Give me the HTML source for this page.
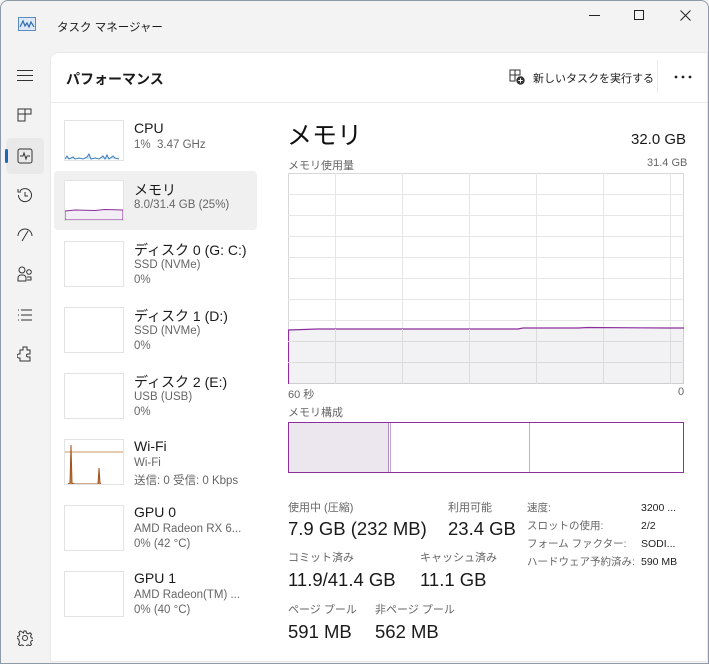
<!DOCTYPE html>
<html><head><meta charset="utf-8"><style>
*{margin:0;padding:0;box-sizing:border-box}
body{width:709px;height:664px;overflow:hidden;background:#f3f3f3;font-family:"Liberation Sans","Noto Sans CJK JP",sans-serif;color:#1a1a1a;position:relative}
.a{position:absolute;white-space:nowrap}
.win{position:absolute;left:0;top:0;width:709px;height:664px;border:1px solid #8e9aa8;border-radius:8px 8px 0 0}
.panel{position:absolute;left:50px;top:52px;width:658px;height:610px;background:#fff;border-radius:8px 0 0 0;border:1px solid #e8e8e8}
.th{position:absolute;left:64px;width:60px;height:46px;border:1px solid #e3e3e3;background:#fff}
.t{font-size:14px;color:#1a1a1a}
.s{font-size:11.5px;color:#666}
.lbl{font-size:11px;color:#666}
.big{font-size:18.5px;color:#1a1a1a}
</style></head><body>
<div class="win"></div>
<svg class="a" style="left:18px;top:17px" width="18" height="14" viewBox="0 0 18 14"><rect x="0.5" y="0.5" width="17" height="13" fill="#dfe9f5" stroke="#5b8bc4"/><path d="M2 10 L5 4 L7 9 L9 6 L11 10 L13 5 L16 10" fill="none" stroke="#2b6cb0" stroke-width="1.2"/></svg>
<div class="a" style="left:57px;top:19px;font-size:11.5px">タスク マネージャー</div>
<div class="a" style="left:589px;top:15px;width:11px;border-top:1px solid #222"></div>
<div class="a" style="left:634px;top:10px;width:10px;height:10px;border:1px solid #222"></div>
<svg class="a" style="left:680px;top:10px" width="11" height="11" viewBox="0 0 11 11"><path d="M0.5 0.5L10.5 10.5M10.5 0.5L0.5 10.5" stroke="#222" stroke-width="1"/></svg>
<div class="a" style="left:17px;top:70px;width:16px;height:11px;border-top:1px solid #333;border-bottom:1px solid #333"></div>
<div class="a" style="left:17px;top:75px;width:16px;border-top:1px solid #333"></div>
<svg class="a" style="left:17px;top:108px" width="16" height="14" viewBox="0 0 16 14" fill="none" stroke="#333"><path d="M1 1h7v5H1zM8 1h6v5H8zM1 6h7v7H1z"/></svg>
<div class="a" style="left:6px;top:138px;width:38px;height:36px;background:#e9e9e9;border-radius:5px"></div>
<div class="a" style="left:5px;top:149px;width:3px;height:14px;background:#1e63b8;border-radius:2px"></div>
<svg class="a" style="left:17px;top:148px" width="16" height="16" viewBox="0 0 16 16" fill="none" stroke="#333"><rect x="1" y="1" width="14" height="14" rx="2"/><path d="M3 8h3l1-3 2 6 1-3h3"/></svg>
<svg class="a" style="left:17px;top:187px" width="16" height="16" viewBox="0 0 16 16" fill="none" stroke="#333"><path d="M3 4A6.5 6.5 0 1 1 1.5 8M1 2v3h3M8 5v4h3"/></svg>
<svg class="a" style="left:17px;top:228px" width="16" height="14" viewBox="0 0 16 14" fill="none" stroke="#333"><path d="M1 8A7 7 0 0 1 15 8M8 8l3-5M5 13l3-5"/></svg>
<svg class="a" style="left:17px;top:266px" width="16" height="16" viewBox="0 0 16 16" fill="none" stroke="#333"><circle cx="5" cy="4" r="3"/><circle cx="12" cy="6" r="2.3"/><path d="M1 15v-3a3 3 0 0 1 3-3h2a3 3 0 0 1 3 3v3zM10 11h4v3h-4"/></svg>
<svg class="a" style="left:17px;top:308px" width="16" height="14" viewBox="0 0 16 14" fill="none" stroke="#333"><path d="M1 2h1M1 7h1M1 12h1M4 2h11M4 7h11M4 12h11"/></svg>
<svg class="a" style="left:17px;top:346px" width="16" height="17" viewBox="0 0 16 17" fill="none" stroke="#333"><path d="M6 1h4v3h3v4h-2a1.5 1.5 0 0 0 0 3h2v4H3v-3h-1a2 2 0 0 1 0-4h1V4h3z"/></svg>
<svg class="a" style="left:17px;top:630px" width="16" height="16" viewBox="0 0 16 16" fill="none" stroke="#333"><circle cx="8" cy="8" r="2.5"/><path d="M7 1h2l.5 2 1.8.8 1.8-1 1.4 1.4-1 1.8.8 1.8 2 .5v2l-2 .5-.8 1.8 1 1.8-1.4 1.4-1.8-1-1.8.8-.5 2H7l-.5-2-1.8-.8-1.8 1-1.4-1.4 1-1.8L1.700 9 0 8.5v-2l2-.5.8-1.8-1-1.8 1.4-1.4 1.8 1L6.5 3z"/></svg>
<div class="panel"></div>
<div class="a" style="left:51px;top:102px;width:657px;border-top:1px solid #eaeaea"></div>
<div class="a" style="left:66px;top:69px;font-size:14px;font-weight:bold;color:#1a1a1a">パフォーマンス</div>
<svg class="a" style="left:509px;top:69px" width="16" height="16" viewBox="0 0 16 16"><path d="M1 1h5v5H1zM6 1h5v5H6zM1 6h5v6H1z" fill="none" stroke="#333"/><circle cx="11.5" cy="11.5" r="4.2" fill="#333"/><path d="M11.5 9.3v4.4M9.3 11.5h4.4" stroke="#fff"/></svg>
<div class="a" style="left:533px;top:70px;font-size:11px">新しいタスクを実行する</div>
<div class="a" style="left:657px;top:60px;height:33px;border-left:1px solid #eaeaea"></div>
<svg class="a" style="left:674px;top:75px" width="18" height="4" viewBox="0 0 18 4"><circle cx="2" cy="2" r="1.4" fill="#222"/><circle cx="9" cy="2" r="1.4" fill="#222"/><circle cx="16" cy="2" r="1.4" fill="#222"/></svg>
<div class="a" style="left:54px;top:171px;width:203px;height:59px;background:#f0f0f0;border-radius:4px"></div>
<div class="th" style="top:120px;height:41px"><svg width="58" height="39" viewBox="0 0 58 39"><path d="M0 38 L2 35 L4 38 L8 36 L10 38 L14 37 L18 38 L22 36 L24 33 L26 38 L30 37 L34 38 L38 35 L40 38 L42 34 L44 38 L48 35 L50 37 L54 38" fill="#cfe3f3" stroke="#3d7fba" stroke-width="1"/></svg></div>
<div class="a t" style="left:134px;top:120px">CPU</div>
<div class="a s" style="left:134px;top:139px">1%&nbsp; 3.47 GHz</div>
<div class="th" style="top:180px;height:41px"><svg width="58" height="39" viewBox="0 0 58 39"><path d="M0 38V30 L10 29 L30 29.5 L40 28.5 L58 29 V39 H0z" fill="#f3eef5" stroke="#8b2f9c"/></svg></div>
<div class="a t" style="left:134px;top:180px">メモリ</div>
<div class="a s" style="left:134px;top:199px">8.0/31.4 GB (25%)</div>
<div class="th" style="top:241px"></div>
<div class="a t" style="left:134px;top:240px">ディスク 0 (G: C:)</div>
<div class="a s" style="left:134px;top:259px">SSD (NVMe)</div>
<div class="a s" style="left:134px;top:274px">0%</div>
<div class="th" style="top:307px"></div>
<div class="a t" style="left:134px;top:306px">ディスク 1 (D:)</div>
<div class="a s" style="left:134px;top:325px">SSD (NVMe)</div>
<div class="a s" style="left:134px;top:340px">0%</div>
<div class="th" style="top:373px"></div>
<div class="a t" style="left:134px;top:372px">ディスク 2 (E:)</div>
<div class="a s" style="left:134px;top:391px">USB (USB)</div>
<div class="a s" style="left:134px;top:406px">0%</div>
<div class="th" style="top:439px"><svg width="58" height="44" viewBox="0 0 58 44"><path d="M0 12H58" stroke="#b8742a" stroke-width="0.8"/><path d="M3 44 L5 43 L6 5 L7 43 L9 44 L33 44 L34 28 L35 43 L36 44" fill="#c98a4a" stroke="#a0521f"/></svg></div>
<div class="a t" style="left:134px;top:438px">Wi-Fi</div>
<div class="a s" style="left:134px;top:457px">Wi-Fi</div>
<div class="a s" style="left:134px;top:472px">送信: 0 受信: 0 Kbps</div>
<div class="th" style="top:505px"></div>
<div class="a t" style="left:134px;top:504px">GPU 0</div>
<div class="a s" style="left:134px;top:523px">AMD Radeon RX 6...</div>
<div class="a s" style="left:134px;top:538px">0% (42 °C)</div>
<div class="th" style="top:571px"></div>
<div class="a t" style="left:134px;top:570px">GPU 1</div>
<div class="a s" style="left:134px;top:589px">AMD Radeon(TM) ...</div>
<div class="a s" style="left:134px;top:604px">0% (40 °C)</div>
<div class="a" style="left:287px;top:116px;font-size:25px;color:#111">メモリ</div>
<div class="a" style="left:631px;top:131px;font-size:15px">32.0 GB</div>
<div class="a lbl" style="left:288px;top:157px">メモリ使用量</div>
<div class="a lbl" style="left:647px;top:157px">31.4 GB</div>
<svg class="a" style="left:288px;top:173px" width="396" height="211" viewBox="0 0 396 211">
<rect x="0.5" y="0.5" width="395" height="210" fill="#fff" stroke="#d8d8d8"/>
<g stroke="#e6e6e6" stroke-width="1">
<path d="M0 21.5H396M0 42.5H396M0 63.5H396M0 84.5H396M0 105.5H396M0 126.5H396M0 147.5H396M0 168.5H396M0 189.5H396"/>
<path d="M47.5 0V211M114.5 0V211M181.5 0V211M248.5 0V211M315.5 0V211M382.5 0V211"/>
</g>
<path d="M0.5 211V157 L30 156 L230 156 L235 155 L290 155 L300 154.5 L380 155 L396 155 V211z" fill="rgba(150,140,160,0.12)" stroke="none"/>
<path d="M0.5 211V157 L30 156 L230 156 L235 155 L290 155 L300 154.5 L380 155 L396 155" fill="none" stroke="#8b2f9c" stroke-width="1.2"/>
<g stroke="#dcdcdc"><path d="M0 168.5H396M0 189.5H396M47.5 156V211M114.5 156V211M181.5 156V211M248.5 156V211M315.5 156V211M382.5 156V211"/></g>
</svg>
<div class="a lbl" style="left:288px;top:386px">60 秒</div>
<div class="a lbl" style="left:678px;top:386px">0</div>
<div class="a lbl" style="left:288px;top:404px">メモリ構成</div>
<div class="a" style="left:288px;top:422px;width:396px;height:51px;border:1.5px solid #8b2f9c;background:#fff"></div>
<div class="a" style="left:289px;top:423px;width:100px;height:49px;background:#ece7ef;border-right:1px solid #b58cbf"></div>
<div class="a" style="left:390px;top:423px;height:49px;border-left:1px solid #c9a7d0"></div>
<div class="a" style="left:529px;top:423px;height:49px;border-left:1px solid #c9a7d0"></div>
<div class="a lbl" style="left:288px;top:499px">使用中 (圧縮)</div>
<div class="a big" style="left:288px;top:518px">7.9 GB (232 MB)</div>
<div class="a lbl" style="left:448px;top:499px">利用可能</div>
<div class="a big" style="left:448px;top:518px">23.4 GB</div>
<div class="a lbl" style="left:288px;top:549px">コミット済み</div>
<div class="a big" style="left:288px;top:569px">11.9/41.4 GB</div>
<div class="a lbl" style="left:420px;top:549px">キャッシュ済み</div>
<div class="a big" style="left:420px;top:569px">11.1 GB</div>
<div class="a lbl" style="left:288px;top:601px">ページ プール</div>
<div class="a big" style="left:288px;top:621px">591 MB</div>
<div class="a lbl" style="left:375px;top:601px">非ページ プール</div>
<div class="a big" style="left:375px;top:621px">562 MB</div>
<div class="a" style="left:527px;top:499px;line-height:18px;font-size:10.5px;color:#666">速度:<br>スロットの使用:<br>フォーム ファクター:<br>ハードウェア予約済み:</div>
<div class="a" style="left:641px;top:499px;line-height:18px;font-size:10.5px;color:#222">3200 ...<br>2/2<br>SODI...<br>590 MB</div>
</body></html>
